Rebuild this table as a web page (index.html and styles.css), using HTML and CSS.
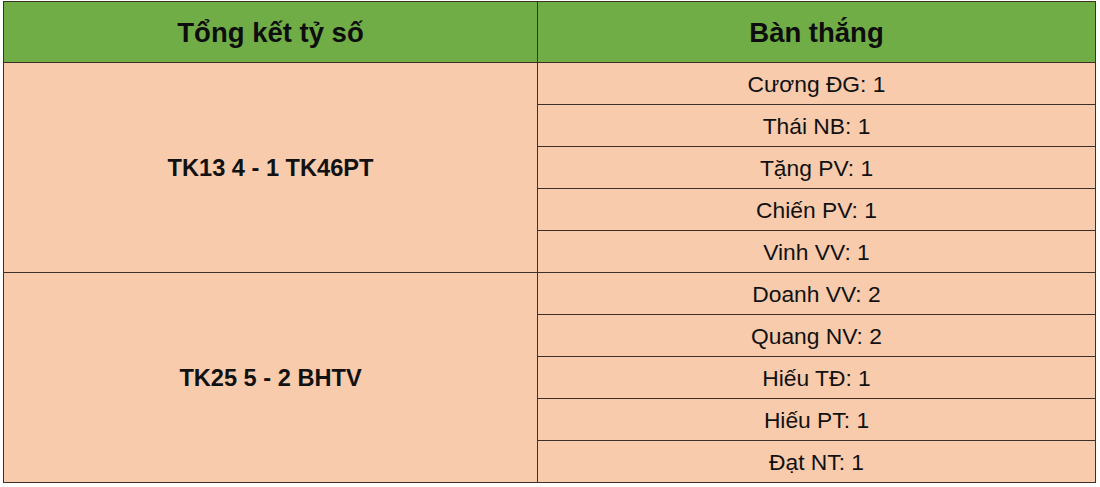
FILE: index.html
```html
<!DOCTYPE html>
<html lang="vi">
<head>
<meta charset="utf-8">
<link rel="stylesheet" href="styles.css">
</head>
<body>
<table class="score">
  <colgroup><col class="c1"><col class="c2"></colgroup>
  <thead>
    <tr><th>Tổng kết tỷ số</th><th>Bàn thắng</th></tr>
  </thead>
  <tbody>
    <tr><td class="match" rowspan="5">TK13 4 - 1 TK46PT</td><td>Cương ĐG: 1</td></tr>
    <tr><td>Thái NB: 1</td></tr>
    <tr><td>Tặng PV: 1</td></tr>
    <tr><td>Chiến PV: 1</td></tr>
    <tr><td>Vinh VV: 1</td></tr>
    <tr><td class="match" rowspan="5">TK25 5 - 2 BHTV</td><td>Doanh VV: 2</td></tr>
    <tr><td>Quang NV: 2</td></tr>
    <tr><td>Hiếu TĐ: 1</td></tr>
    <tr><td>Hiếu PT: 1</td></tr>
    <tr><td>Đạt NT: 1</td></tr>
  </tbody>
</table>
</body>
</html>
```
FILE: styles.css
```css
html, body {
  margin: 0;
  padding: 0;
  background: #ffffff;
}
body {
  padding: 1px 0 0 3px;
  font-family: "Liberation Sans", Arial, sans-serif;
  color: #111111;
}
.score {
  border-collapse: collapse;
  table-layout: fixed;
  width: 1092px;
}
.c1 { width: 534px; }
.c2 { width: 558px; }
.score th, .score td {
  border: 1px solid #3e3029;
  padding: 0;
  text-align: center;
  vertical-align: middle;
}
.score th {
  background: #70ad47;
  height: 58px;
  font-size: 27.5px;
  font-weight: bold;
  color: #0d0d0d;
  padding-top: 2px;
}
.score td {
  background: #f8cbad;
  height: 39px;
  font-size: 22.8px;
  padding-top: 2px;
}
.score td.match {
  font-weight: bold;
  font-size: 23.6px;
}
```
